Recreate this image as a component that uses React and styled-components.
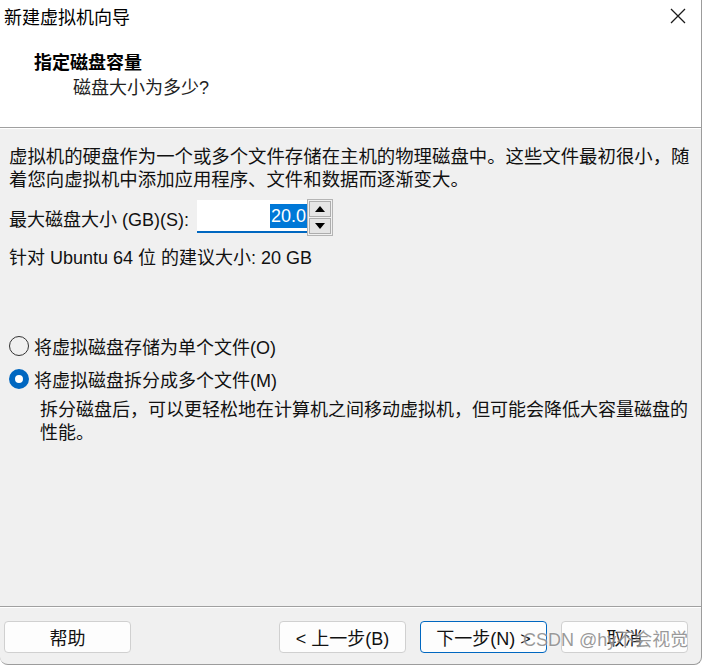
import React from "react";
import styled, { createGlobalStyle } from "styled-components";

const GlobalStyle = createGlobalStyle`
  html, body {
    margin: 0;
    padding: 0;
    background: #ffffff;
  }
  body {
    font-family: "Liberation Sans", "Noto Sans CJK SC", sans-serif;
    font-size: 18px;
    color: #000;
  }
`;

function App() {
  return (
    <Window>
      <GlobalStyle />
      <TitleBar>
        <TitleText>新建虚拟机向导</TitleText>
        <CloseButton>
          <svg width="16" height="16" viewBox="0 0 16 16">
            <path d="M1 1 L15 15 M15 1 L1 15" stroke="#1a1a1a" strokeWidth="1.3" fill="none" />
          </svg>
        </CloseButton>
      </TitleBar>
      <Header>
        <HeaderTitle>指定磁盘容量</HeaderTitle>
        <HeaderSub>磁盘大小为多少?</HeaderSub>
      </Header>
      <Etched />
      <Body>
        <Paragraph>
          虚拟机的硬盘作为一个或多个文件存储在主机的物理磁盘中。这些文件最初很小，随着您向虚拟机中添加应用程序、文件和数据而逐渐变大。
        </Paragraph>
        <SizeRow>
          <Label>最大磁盘大小 (GB)(S):</Label>
          <SpinInput>
            <Selected>20.0</Selected>
          </SpinInput>
          <Spinner>
            <SpinButton>
              <svg width="10" height="6" viewBox="0 0 10 6">
                <path d="M0 6 L5 0 L10 6 Z" fill="#000" />
              </svg>
            </SpinButton>
            <SpinButton>
              <svg width="10" height="6" viewBox="0 0 10 6">
                <path d="M0 0 L5 6 L10 0 Z" fill="#000" />
              </svg>
            </SpinButton>
          </Spinner>
        </SizeRow>
        <Recommend>针对 Ubuntu 64 位 的建议大小: 20 GB</Recommend>
        <RadioRow $first>
          <Radio />
          <RadioLabel>将虚拟磁盘存储为单个文件(O)</RadioLabel>
        </RadioRow>
        <RadioRow>
          <Radio $checked />
          <RadioLabel>将虚拟磁盘拆分成多个文件(M)</RadioLabel>
        </RadioRow>
        <Description>
          拆分磁盘后，可以更轻松地在计算机之间移动虚拟机，但可能会降低大容量磁盘的性能。
        </Description>
      </Body>
      <Etched />
      <Footer>
        <Button>帮助</Button>
        <Spacer />
        <ButtonGroup>
          <Button>&lt; 上一步(B)</Button>
          <Button $primary>下一步(N) &gt;</Button>
          <Button>取消</Button>
        </ButtonGroup>
        <Watermark>CSDN @hy不会视觉</Watermark>
      </Footer>
    </Window>
  );
}

const Window = styled.div`
  width: 701px;
  height: 664px;
  display: flex;
  flex-direction: column;
  border-right: 1px solid #9c9c9c;
  border-bottom: 1px solid #9c9c9c;
  border-radius: 0 0 8px 8px;
  overflow: hidden;
  background: #f0f0f0;
`;

const TitleBar = styled.div`
  height: 32px;
  display: flex;
  align-items: center;
  justify-content: space-between;
  background: #ffffff;
  padding-left: 4px;
`;

const TitleText = styled.div`
  font-family: "Noto Sans CJK SC", sans-serif;
  font-size: 18px;
  line-height: 32px;
  color: #000;
`;

const CloseButton = styled.div`
  width: 46px;
  height: 32px;
  display: flex;
  align-items: center;
  justify-content: center;
`;

const Header = styled.div`
  height: 95px;
  box-sizing: border-box;
  background: #ffffff;
  padding: 17px 0 0 34px;
`;

const HeaderTitle = styled.div`
  font-family: "Noto Sans CJK SC", sans-serif;
  font-weight: 700;
  font-size: 18px;
  line-height: 24px;
  color: #000;
`;

const HeaderSub = styled.div`
  margin: 3px 0 0 39px;
  font-size: 18px;
  line-height: 24px;
  color: #222;
`;

const Etched = styled.div`
  height: 1px;
  background: #a0a0a0;
  border-bottom: 1px solid #ffffff;
`;

const Body = styled.div`
  flex: 1;
  padding: 16px 0 0 9px;
`;

const Paragraph = styled.div`
  max-width: 684px;
  font-size: 18.4px;
  line-height: 23px;
  color: #111;
`;

const SizeRow = styled.div`
  margin-top: 8px;
  height: 37px;
  display: flex;
  align-items: center;
`;

const Label = styled.div`
  width: 188px;
  color: #111;
`;

const SpinInput = styled.div`
  width: 110px;
  height: 33px;
  box-sizing: border-box;
  background: #ffffff;
  border-bottom: 2px solid #0067c0;
  display: flex;
  align-items: center;
  justify-content: flex-end;
  margin-top: -2px;
`;

const Selected = styled.span`
  background: #0078d7;
  color: #ffffff;
  line-height: 24px;
  padding: 0 1px;
`;

const Spinner = styled.div`
  width: 26px;
  height: 37px;
  box-sizing: border-box;
  border: 1px solid #b4b4b4;
  display: flex;
  flex-direction: column;
  gap: 1px;
  padding: 1px;
  background: #f0f0f0;
`;

const SpinButton = styled.div`
  flex: 1;
  background: #e5e5e5;
  border: 1px solid #adadad;
  display: flex;
  align-items: center;
  justify-content: center;
`;

const Recommend = styled.div`
  margin-top: 11px;
  line-height: 23px;
  color: #111;
`;

const RadioRow = styled.div`
  margin-top: ${(p) => (p.$first ? "64px" : "9px")};
  height: 24px;
  display: flex;
  align-items: center;
  gap: 5px;
`;

const Radio = styled.div`
  width: 20px;
  height: 20px;
  box-sizing: border-box;
  border-radius: 50%;
  border: ${(p) => (p.$checked ? "6px solid #0067c0" : "1px solid #333")};
  background: ${(p) => (p.$checked ? "#ffffff" : "transparent")};
`;

const RadioLabel = styled.div`
  color: #111;
`;

const Description = styled.div`
  margin: 8px 0 0 31px;
  max-width: 660px;
  line-height: 23px;
  color: #111;
`;

const Footer = styled.div`
  position: relative;
  flex: 0 0 56px;
  display: flex;
  align-items: flex-start;
  padding: 13px 13px 0 4px;
  box-sizing: border-box;
`;

const Spacer = styled.div`
  flex: 1;
`;

const ButtonGroup = styled.div`
  display: flex;
  gap: 14px;
`;

const Button = styled.div`
  width: 127px;
  height: 32px;
  box-sizing: border-box;
  border: 1px solid ${(p) => (p.$primary ? "#0067c0" : "#d0d0d0")};
  border-radius: 4px;
  background: #fdfdfd;
  display: flex;
  align-items: center;
  justify-content: center;
  font-size: 18px;
  color: #111;
`;

const Watermark = styled.div`
  position: absolute;
  left: 523px;
  top: 20px;
  font-family: "Liberation Sans", "Noto Sans CJK SC", sans-serif;
  font-size: 18px;
  line-height: 24px;
  color: rgba(120, 120, 120, 0.75);
  text-shadow: 0 0 2px rgba(255, 255, 255, 0.9);
  pointer-events: none;
  white-space: nowrap;
`;

export default App;
